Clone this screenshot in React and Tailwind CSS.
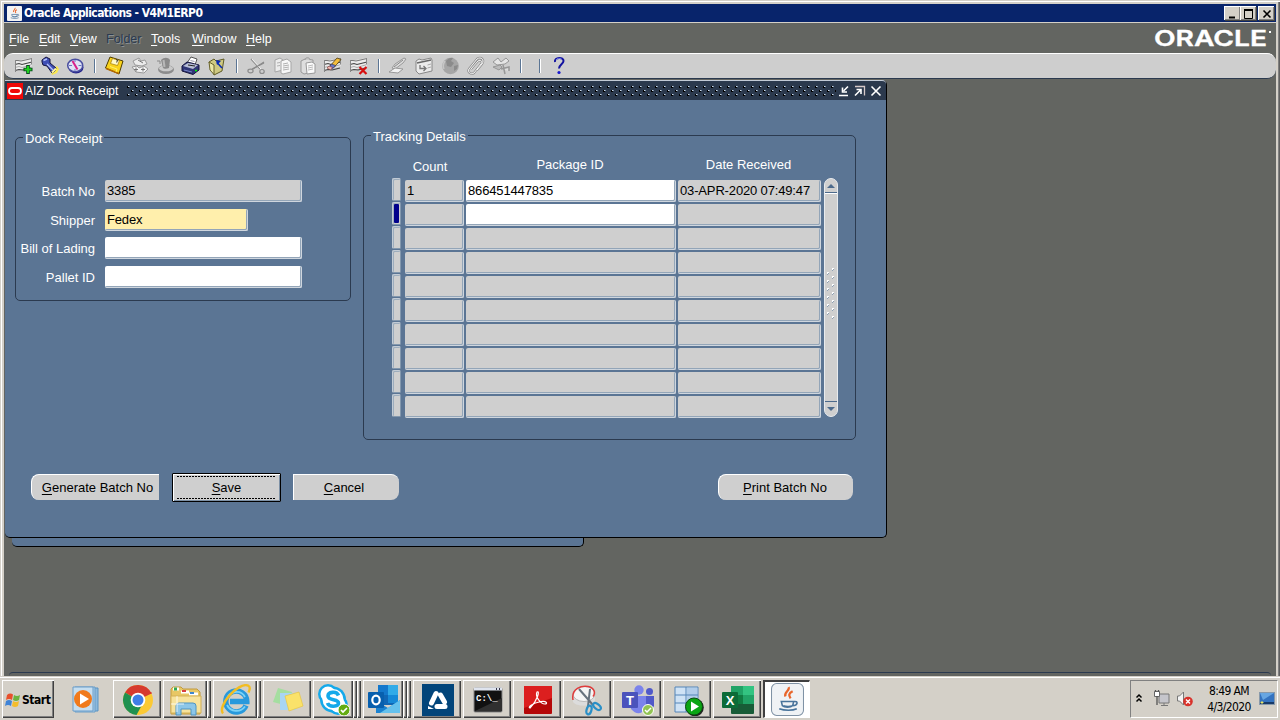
import React from "react";

const CELL =
  "h-[22px] shrink-0 rounded-[2px] border-r border-b border-[#cfd6de] shadow-[inset_-1px_-1px_0_#93a5b8] pl-[2px] text-[13px] leading-[21px] tracking-[-0.15px] text-black whitespace-nowrap overflow-hidden";

function Svg({ children, className, w = 20, h = 20, box }) {
  return (
    <svg className={className} width={w} height={h} viewBox={box || `0 0 ${w} ${h}`} fill="none">
      {children}
    </svg>
  );
}

/* ---------- toolbar drawings ---------- */

function Rows() {
  return (
    <g>
      <path d="M1 5 18 2v8L1 15z" fill="#ececec" />
      <path d="M1 4.500h3l3 .5 11-2.500" stroke="#777" />
      <path d="M1 8.500l4-1 3 1 10-2.500" stroke="#444" strokeWidth="1.200" />
      <path d="M1 11.500l4-1 3 1 10-3" stroke="#aaa" />
      <path d="M1 14.500l4-1 4 .5 8-2" stroke="#444" strokeWidth="1.200" />
      <path d="M1.500 4v12M17.500 2v6" stroke="#888" />
    </g>
  );
}

const icons = {
  newRow: (
    <g>
      <Rows />
      <path d="M14 9v9M9.500 13.500h9" stroke="#064d1c" strokeWidth="3.600" />
      <path d="M14 10v7M10.500 13.500h7" stroke="#1fd01f" strokeWidth="2" />
    </g>
  ),
  find: (
    <g>
      <path d="M12 13l5-3 2 3-2 4-5 2-1-3z" fill="#fbe94e" />
      <path d="M2 4l4-3 4 2v4l6 5-1 3-3 2-5-7-4-1-1-3z" fill="#3f4eb5" stroke="#15153f" />
      <path d="M3.500 4.500L7 3M7 8l6 6" stroke="#b5c2fa" strokeWidth="1.400" />
      <path d="M12 16.500l4-4" stroke="#fff6a0" strokeWidth="2" />
    </g>
  ),
  compass: (
    <g>
      <ellipse cx="11" cy="11.500" rx="7.500" ry="6" fill="#24248a" />
      <ellipse cx="10.200" cy="9.500" rx="7.500" ry="6.200" fill="#dfe3f5" stroke="#4a4fa0" strokeWidth="1.500" />
      <path d="M4 9.500h3M13.500 9.500h3M10 4v2M10 13v2" stroke="#6a74c0" />
      <path d="M7.500 5l5 8.500" stroke="#d8208a" strokeWidth="2" />
    </g>
  ),
  save: (
    <g>
      <path d="M6 1l13 4-4 13L1.500 12z" fill="#f9d21b" stroke="#4c3c00" />
      <path d="M2 12.500l13 5" stroke="#b66b00" strokeWidth="1.600" />
      <path d="M8.500 2.500l7 2-2 5-7-2z" fill="#fff9c7" stroke="#a27900" strokeWidth=".7" />
      <path d="M12 3.500l1.500.5-.8 2.500" stroke="#333" />
      <path d="M6 10.500l7 2.500-1 3" stroke="#fff06b" />
    </g>
  ),
  next: (
    <g stroke="#9a9a9a">
      <path d="M3 5l6-3 2 3 4-1 2 4-5 2-7-1z" fill="#ececec" />
      <path d="M2 11l5-1 2 2 5-2 4 3-4 4-8-1z" fill="#f2f2f2" />
      <path d="M4 13.500h4m3 0h4M6 11.500v4m7-4v4" stroke="#777" />
      <path d="M8 4l5 3" stroke="#777" />
    </g>
  ),
  hat: (
    <g>
      <ellipse cx="11" cy="13.500" rx="8" ry="4.500" fill="#8c8c8c" />
      <ellipse cx="11" cy="12.300" rx="7" ry="3" fill="#c9c9c9" />
      <path d="M6 4c3-3 7-3 9 0l-1 8c-2 1-5 1-6 0z" fill="#8a8a8a" />
      <path d="M8.500 4l1 7" stroke="#b8b8b8" strokeWidth="2" />
      <path d="M2 5h3v3" stroke="#888" />
    </g>
  ),
  print: (
    <g>
      <path d="M6 7l4-6 6 2-2 6z" fill="#fff" stroke="#555" />
      <path d="M9.500 4.500l4 1M8.500 6.500l4 1" stroke="#99a" />
      <path d="M1 10l5-4 12 3v5l-6 4.500L1 15z" fill="#2f3575" stroke="#15153c" />
      <path d="M2 10l5-3 10 2-5 4z" fill="#b9bfd5" />
      <path d="M7 9l7 1" stroke="#222" />
      <path d="M3 14l8 2" stroke="#7684c8" />
      <path d="M14 14.500h2" stroke="#0f0" strokeWidth="1.500" />
    </g>
  ),
  folderArrow: (
    <g>
      <path d="M2 6l5-3 2 2 8-2-2 12-8 4z" fill="#cfc981" stroke="#5e5a25" />
      <path d="M2 6l5 3v9.500L3 14z" fill="#ece8a6" stroke="#68632b" />
      <path d="M15 12L10 6.500" stroke="#0b2bb2" strokeWidth="1.600" />
      <path d="M9 4l5 1-4 4z" fill="#0b2bb2" />
    </g>
  ),
  cut: (
    <g stroke="#8c8c8c" strokeWidth="1.200">
      <path d="M4 3l9 10M17 7L5 13" />
      <path d="M5 3l9 10" stroke="#fff" strokeWidth=".8" />
      <ellipse cx="3.500" cy="15" rx="2.600" ry="1.800" />
      <ellipse cx="15" cy="15.500" rx="2.200" ry="2" />
      <path d="M6 13L17 6" stroke="#888" />
    </g>
  ),
  copy: (
    <g stroke="#a5a5a5">
      <path d="M2 4l5-2 3 2v10l-8 2z" fill="#ececec" />
      <path d="M8 5l6-2 4 3v10l-8 2-2-1z" fill="#f7f7f7" />
      <path d="M10 8l5-1m-5 3l6-1m-6 3l6-1m-6 3l6-1M4 7l3-.500M4 10l3-.500" stroke="#b0b0b0" />
    </g>
  ),
  paste: (
    <g stroke="#999">
      <path d="M3 5l4-2 8 1v12l-9 2-3-2z" fill="#dedede" />
      <path d="M7 4c0-3 5-3 5 0" fill="#ccc" />
      <path d="M8 7l6-1 3 2v9l-8 1z" fill="#fafafa" />
      <path d="M10 10l5-1m-5 3l5-1m-5 3l5-1" stroke="#bbb" />
    </g>
  ),
  clear: (
    <g>
      <Rows />
      <path d="M7 10l7-8 4 1.500-7 8z" fill="#f4bd3c" stroke="#4d3b12" strokeWidth=".8" />
      <path d="M6 11l2.500-3 4 1.500-2.500 3z" fill="#6a78c8" stroke="#222a5a" strokeWidth=".6" />
      <path d="M4 12l2-2 3.500 1.500-2 2.500z" fill="#f2b9b0" stroke="#733" strokeWidth=".6" />
    </g>
  ),
  remove: (
    <g>
      <Rows />
      <path d="M10.500 11l7 7M17.500 11l-7 7" stroke="#d80f0f" strokeWidth="2.200" />
    </g>
  ),
  pen: (
    <g stroke="#999">
      <path d="M5 12l3-4 9-6 2 1-3 4-8 6z" fill="#ddd" />
      <path d="M2 16l6-4 8 1-5 4z" fill="#f2f2f2" />
      <path d="M7 11l9-7" stroke="#888" />
    </g>
  ),
  folderTools: (
    <g stroke="#888">
      <path d="M2 5l3-2 3 1 9-2 1 2v11l-13 3-3-3z" fill="#ebebeb" />
      <path d="M3 7l14-3" stroke="#666" strokeWidth="1.400" />
      <path d="M6 9v3.500h6m-2.500-2.500l2.500 2.500-2.500 2.500" stroke="#777" strokeWidth="1.300" />
      <path d="M13.500 9l3.500-1m-3.500 4l3.500-1" stroke="#aaa" />
    </g>
  ),
  globe: (
    <g>
      <circle cx="10.500" cy="10" r="8.300" fill="#a6a6a6" />
      <path d="M6 5c2-3 6-4 7-3l-2 3 3 2-3 4-4-1zM14 10l4-1-1 4-3 2z" fill="#8b8b8b" />
      <path d="M5 5c-2 3-2 6-1 8" stroke="#c6c6c6" strokeWidth="1.500" />
    </g>
  ),
  clip: (
    <g>
      <path d="M6 13l7-8c3-2 5 1 3 3l-7 9c-3 2-7-1-5-4L12 3c4-3 8 1 5 5l-5 6" stroke="#8d8d8d" strokeWidth="2.200" />
      <path d="M6 13l7-8c3-2 5 1 3 3l-7 9c-3 2-7-1-5-4L12 3c4-3 8 1 5 5l-5 6" stroke="#f5f5f5" strokeWidth="1" />
    </g>
  ),
  propeller: (
    <g stroke="#979797">
      <path d="M2 6l5-4 3 4 5-4 3 3-4 3-8 1z" fill="#e5e5e5" />
      <path d="M2 11l7-2 2 2-3 3z" fill="#bbb" />
      <path d="M12 9l2 9M10 13l8-2v4" fill="#ddd" strokeWidth="1.500" />
    </g>
  ),
  help: (
    <g>
      <path d="M6 6c-1-5 9-5.500 8.500-1 0 3-4 3-4.500 7.500" stroke="#1212a0" strokeWidth="2" />
      <path d="M7 4c1-2 4-2 5.500-1" stroke="#8c95f5" strokeWidth=".8" />
      <circle cx="10" cy="16.500" r="1.600" fill="#1818d0" />
    </g>
  ),
};

const toolbar = [
  ["newRow", ""], ["find", "ml-[6px]"], ["compass", "ml-[5px]"], ["sep", "ml-[9px]"],
  ["save", "ml-[8px]"], ["next", "ml-[6px]"], ["hat", "ml-[5px]"], ["print", "ml-[6px]"],
  ["folderArrow", "ml-[6px]"], ["sep", "ml-[9px]"], ["cut", "ml-[9px]"], ["copy", "ml-[6px]"],
  ["paste", "ml-[5px]"], ["clear", "ml-[5px]"], ["remove", "ml-[6px]"], ["sep", "ml-[9px]"],
  ["pen", "ml-[7px]"], ["folderTools", "ml-[7px]"], ["globe", "ml-[6px]"], ["clip", "ml-[5px]"],
  ["propeller", "ml-[6px]"], ["sep", "ml-[9px]"], ["sep", "ml-[17px]"], ["help", "ml-[8px]"],
];

function JavaCup() {
  return (
    <g>
      <path d="M17 4c2 3-5 5-3 9M21 8c-4 2-4 4-2 7" stroke="#e8662c" strokeWidth="2.200" />
      <path d="M10 18h12l-1 4c-2 2-8 2-10 0zM22 18c5-1 4 4-1 4M8 25c5 2 13 2 17 0M12 22c3 1 6 1 9 0" stroke="#48739b" strokeWidth="1.500" />
    </g>
  );
}

/* ---------- application window ---------- */

function TitleBar() {
  const btn =
    "flex h-[14px] w-[16px] items-center justify-center border-t border-l border-white bg-[#d4d0c8] shadow-[inset_-1px_-1px_0_#808080,1px_1px_0_#404040]";
  return (
    <div className="flex h-[18px] items-center bg-[#08246b] pl-[3px] pr-[2px]">
      <Svg w={15} h={15} box="0 0 32 32" className="shrink-0">
        <rect width="32" height="32" rx="2" fill="#f3f3f3" />
        <JavaCup />
      </Svg>
      <span className="ml-[2px] flex-1 whitespace-nowrap font-['DejaVu_Sans_Condensed','DejaVu_Sans',sans-serif] text-[12px] leading-[16px] font-bold tracking-[-0.57px] text-white">
        Oracle Applications - V4M1ERP0
      </span>
      <div className="flex">
        <div className={btn}>
          <Svg w={14} h={12}><path d="M3 9.500h6" stroke="#000" strokeWidth="2" /></Svg>
        </div>
        <div className={btn}>
          <Svg w={14} h={12}><path d="M2.500 2v8.500h8V2" stroke="#000" /><path d="M2 2h9" stroke="#000" strokeWidth="2" /></Svg>
        </div>
        <div className={`${btn} ml-[2px]`}>
          <Svg w={14} h={12}><path d="M3.500 2.500l7 7M10.500 2.500l-7 7" stroke="#000" strokeWidth="1.600" /></Svg>
        </div>
      </div>
    </div>
  );
}

const menus = [
  ["", "F", "ile", "w-[30px]"],
  ["", "E", "dit", "w-[31px]"],
  ["", "V", "iew", "w-[36px]"],
  ["Fo", "l", "der", "w-[45px]"],
  ["", "T", "ools", "w-[41px]"],
  ["", "W", "indow", "w-[54px]"],
  ["", "H", "elp", "w-[40px]"],
];

function MenuBar() {
  return (
    <div className="flex h-[30px] items-center pt-[2px] pl-[5px] pr-[3px] text-[12.500px] text-white">
      {menus.map(([a, u, b, w]) => (
        <div
          key={u}
          className={`${w} whitespace-nowrap leading-[16px] ${a ? "text-[#2b3a4f] [text-shadow:1px_1px_0_#8a8f92]" : ""}`}
        >
          {a}
          <span className="underline underline-offset-2">{u}</span>
          {b}
        </div>
      ))}
      <svg className="-mt-[2px] ml-auto" width="120" height="22" viewBox="0 0 120 22">
        <text x="1" y="18.500" fill="#fff" stroke="#fff" strokeWidth=".35" fontFamily="Inter, Liberation Sans, sans-serif" fontWeight="600" fontSize="21" textLength="113" lengthAdjust="spacingAndGlyphs">
          ORACLE
        </text>
        <rect x="116" y="4" width="2" height="2" fill="#fff" />
      </svg>
    </div>
  );
}

function ToolBar() {
  return (
    <div className="flex h-[26px] items-center rounded-[9px] border-t border-b border-t-white border-b-[#2b3a4f] bg-[#cecece] pl-[10px]">
      {toolbar.map(([name, gap], i) =>
        name === "sep" ? (
          <div key={i} className={`${gap} h-[14px] w-[2px] border-l border-[#5b7594] bg-white`} />
        ) : (
          <Svg key={i} className={`${gap} shrink-0`}>{icons[name]}</Svg>
        )
      )}
    </div>
  );
}

function FormTitle() {
  return (
    <div className="flex h-[20px] items-center rounded-tr-[4px] border-t border-[#c3cbd6] bg-[#2b394d]">
      <Svg w={18} h={16} className="shrink-0">
        <rect x="2" width="16" height="16" fill="#f00808" />
        <rect x="4" y="5" width="12" height="6" rx="3" stroke="#fff" strokeWidth="1.800" />
      </Svg>
      <span className="ml-[2px] w-[101px] shrink-0 whitespace-nowrap text-[12px] leading-[16px] text-white">AIZ Dock Receipt</span>
      <svg width="710" height="12" shapeRendering="crispEdges">
        <defs>
          <pattern id="grip" width="8" height="8" patternUnits="userSpaceOnUse">
            <path d="M2 1h1v1h-1zM6 5h1v1h-1z" fill="#c9d8e8" />
            <path d="M3 1h1v1h-1zM7 5h1v1h-1z" fill="#7f93a9" />
            <path d="M1 1h1v2h-1zM2 2h1v1h-1zM5 5h1v2h-1zM6 6h1v1h-1z" fill="#000" />
          </pattern>
        </defs>
        <rect width="710" height="12" fill="url(#grip)" />
      </svg>
      <Svg w={14} h={14} className="ml-[1px]">
        <path d="M2 11.500h9M11 2.500L6.500 7" stroke="#fff" strokeWidth="1.600" />
        <path d="M5.500 3.500v4.500H10" stroke="#fff" strokeWidth="1.600" />
      </Svg>
      <Svg w={14} h={14} className="ml-[2px]">
        <path d="M2 2.500h9.500v9" stroke="#d6c9c9" strokeWidth="1.300" />
        <path d="M2 11.500l5.500-5.500M3.500 5.500H8v4.500" stroke="#fff" strokeWidth="1.600" />
      </Svg>
      <Svg w={14} h={14} className="ml-[2px]">
        <path d="M2.500 2.500l9 9M11.500 2.500l-9 9" stroke="#fff" strokeWidth="1.600" />
      </Svg>
    </div>
  );
}

const fields = [
  ["Batch No", "3385", "w-[197px] bg-[#cfcfcf]", ""],
  ["Shipper", "Fedex", "w-[143px] bg-[#ffefac]", "mt-[7px]"],
  ["Bill of Lading", "", "w-[197px] bg-white", "mt-[6px]"],
  ["Pallet ID", "", "w-[197px] bg-white", "mt-[7px]"],
];

function Legend({ children }) {
  return (
    <div className="ml-[7px] -mt-[8px] h-[16px] w-fit bg-[#5b7594] px-[2px] text-[13px] leading-[17px] whitespace-nowrap text-white">
      {children}
    </div>
  );
}

function DockReceipt() {
  return (
    <section className="mt-[37px] h-[164px] w-[336px] rounded-[5px] border border-[#2b3a4f]">
      <Legend>Dock Receipt</Legend>
      <div className="mt-[34px]">
        {fields.map(([label, value, box, gap]) => (
          <div key={label} className={`flex h-[22px] ${gap}`}>
            <label className="w-[79px] shrink-0 text-right text-[13px] leading-[23px] whitespace-nowrap text-white">{label}</label>
            <div className={`ml-[10px] ${CELL} ${box}`}>{value}</div>
          </div>
        ))}
      </div>
    </section>
  );
}

const records = [
  ["1", "866451447835", "03-APR-2020 07:49:47"],
  ["", "", ""], ["", "", ""], ["", "", ""], ["", "", ""],
  ["", "", ""], ["", "", ""], ["", "", ""], ["", "", ""], ["", "", ""],
];

function ScrollBar() {
  return (
    <div className="-mt-[2px] ml-[3px] flex h-[239px] w-[14px] flex-col items-center rounded-[7px] border border-[#e8ebee] bg-[#cfcfcf]">
      <div className="flex h-[14px] w-full items-center justify-center border-b border-[#4c6a8c]">
        <Svg w={8} h={5}><path d="M0 5l4-4 4 4z" fill="#4c6a8c" /></Svg>
      </div>
      <div className="flex w-full flex-1 items-center justify-center border-t border-white pb-[8px]">
        <svg width="10" height="54" shapeRendering="crispEdges">
          {[0, 1, 2, 3, 4, 5, 6].map((i) => (
            <g key={i}>
              <path d={`M6 ${1 + i * 8}h2v1h-1v1h-1z`} fill="#fff" />
              <path d={`M8 ${2 + i * 8}v1h-1v1h-1v-1h1v-1z`} fill="#8ea0b3" />
              {i < 6 && <path d={`M1 ${5 + i * 8}h2v1h-1v1h-1z`} fill="#fff" />}
              {i < 6 && <path d={`M3 ${6 + i * 8}v1h-1v1h-1v-1h1v-1z`} fill="#8ea0b3" />}
            </g>
          ))}
        </svg>
      </div>
      <div className="flex h-[15px] w-full items-center justify-center border-t border-[#4c6a8c]">
        <Svg w={8} h={5}><path d="M0 0l4 4 4-4z" fill="#4c6a8c" /></Svg>
      </div>
    </div>
  );
}

function TrackingDetails() {
  return (
    <section className="mt-[35px] ml-[12px] h-[305px] w-[493px] rounded-[5px] border border-[#2b3a4f]">
      <Legend>Tracking Details</Legend>
      <div className="mt-[12px] flex h-[24px] pl-[41px] text-center text-[13px] leading-[17px] text-white">
        <div className="w-[50px] pt-[2px]">Count</div>
        <div className="ml-[8px] w-[214px]">Package ID</div>
        <div className="w-[143px]">Date Received</div>
      </div>
      <div className="flex pl-[28px]">
        <div className="-mt-[2px] flex flex-col gap-[1px]">
          {records.map((_, i) => (
            <div
              key={i}
              className="h-[23px] w-[9px] rounded-[2px] border border-[#c3ccd6] border-r-[#8398ae] border-b-[#8398ae] bg-[#cfcfcf] p-[1px] shadow-[inset_1px_1px_0_#9dadbd]"
            >
              {i === 1 && <div className="h-full w-full rounded-[1px] bg-[#00008b]" />}
            </div>
          ))}
        </div>
        <div className="ml-[4px] flex flex-col gap-[2px]">
          {records.map(([count, pkg, date], i) => (
            <div key={i} className="flex gap-[2px]">
              <div className={`${CELL} w-[59px] bg-[#cfcfcf]`}>{count}</div>
              <div className={`${CELL} w-[210px] ${i < 2 ? "bg-white" : "bg-[#cfcfcf]"}`}>{pkg}</div>
              <div className={`${CELL} w-[143px] bg-[#cfcfcf]`}>{date}</div>
            </div>
          ))}
        </div>
        <ScrollBar />
      </div>
    </section>
  );
}

function Button({ mnemonic, rest, className }) {
  return (
    <button
      className={`mt-[1px] flex h-[26px] shrink-0 items-center justify-center border-t border-l border-white bg-[#cfcfcf] pt-[1px] text-[13px] leading-[16px] whitespace-nowrap text-black ${className}`}
    >
      <span><span className="underline underline-offset-2">{mnemonic}</span>{rest}</span>
    </button>
  );
}

function DockForm() {
  return (
    <div className="absolute top-[80px] left-[5px] h-[458px] w-[882px] rounded-[5px] border-r border-b border-black bg-[#5b7594]">
      <FormTitle />
      <div className="flex pl-[10px]">
        <DockReceipt />
        <TrackingDetails />
      </div>
      <div className="mt-[33px] flex items-start pl-[26px]">
        <Button mnemonic="G" rest="enerate Batch No" className="w-[128px] rounded-l-[8px] pl-[4px]" />
        <div className="ml-[13px] flex h-[29px] w-[109px] flex-col items-center justify-between rounded-[1px] border border-black bg-[#cfcfcf] p-[2px] shadow-[inset_1px_1px_0_#fff,inset_-1px_-1px_0_#7d90a5]">
          <div className="h-px w-[99px] bg-[repeating-linear-gradient(90deg,#000_0_2px,transparent_2px_3px)]" />
          <button className="text-[13px] leading-[16px] text-black"><span className="underline underline-offset-2">S</span>ave</button>
          <div className="h-px w-[99px] bg-[repeating-linear-gradient(90deg,#000_0_2px,transparent_2px_3px)]" />
        </div>
        <Button mnemonic="C" rest="ancel" className="ml-[12px] w-[106px] rounded-r-[8px] pr-[5px]" />
        <Button mnemonic="P" rest="rint Batch No" className="ml-[319px] w-[135px] rounded-[8px] pr-[2px]" />
      </div>
    </div>
  );
}

/* ---------- taskbar drawings, 32 x 32 ---------- */

const apps = [
  ["chrome", 1, (
    <g>
      <circle cx="16" cy="16" r="15" fill="#fbc934" />
      <path d="M16 16L3 8.500A15 15 0 0 1 29.500 9.500z" fill="#d63a2f" />
      <path d="M3 8.500A15 15 0 0 0 14.500 31l6-11L16 16z" fill="#1f9150" />
      <path d="M16 9h13.500" stroke="#d63a2f" strokeWidth="2" />
      <circle cx="16" cy="16" r="7.300" fill="#fff" />
      <circle cx="16" cy="16" r="5.500" fill="#3f7ee8" />
    </g>
  )],
  ["explorer", 2, (
    <g>
      <path d="M1 5l2-2h8l2 2h14l3 3v22H1z" fill="#e8c765" stroke="#c29a3e" />
      <path d="M3 5h6M11 8h8M19 10h9" stroke="#fff" strokeWidth="3" />
      <path d="M4 5h3" stroke="#2fa84f" strokeWidth="3" />
      <path d="M12 7h4" stroke="#d94040" strokeWidth="2" />
      <path d="M20 9h4" stroke="#3f87cf" strokeWidth="2" />
      <path d="M1 12h30v17H1z" fill="#f8e39c" stroke="#d3b057" />
      <path d="M6 31v-9q0-3 3-3h14q3 0 3 3v9h-5v-6H11v6z" fill="#8cc6e8" stroke="#4f94c2" />
      <path d="M7 12v16M1 20h13" stroke="#fff" opacity=".8" />
    </g>
  )],
  ["ie", 2, (
    <g>
      <path d="M26 21.500A10.500 10.500 0 1 1 26.800 17.500H10" stroke="#2899dc" strokeWidth="5.500" />
      <path d="M25 22.500A10.500 10.500 0 0 1 7 21M7 15c2-8 14-10 18-2" stroke="#7bd2f7" strokeWidth="1.800" />
      <path d="M3 29.500C-3 22 18-2 28 1.500c2.500 1 2 4 .5 7" stroke="#f3bd22" strokeWidth="2.400" />
    </g>
  )],
  ["notes", 1, (
    <g>
      <path d="M6 4l14 4-4 14-15-4z" fill="#a5dea0" />
      <path d="M8 9h16v17H8z" fill="#a8d5f4" />
      <path d="M13 12l14-4 4 14-14 5z" fill="#fae26a" stroke="#e6c544" strokeWidth=".7" />
    </g>
  )],
  ["skype", 3, (
    <g>
      <circle cx="10" cy="10" r="10" fill="#14a9ea" />
      <circle cx="20" cy="21" r="10" fill="#14a9ea" />
      <circle cx="15" cy="15.500" r="13" fill="#14a9ea" />
      <circle cx="10" cy="10" r="7.500" fill="#fff" />
      <circle cx="20" cy="21" r="7.500" fill="#fff" />
      <circle cx="15" cy="15.500" r="10.500" fill="#fff" />
      <path d="M20.500 11.500c-2-5-10.500-3.500-10.500.5 0 5 10.500 2.500 10.500 7 0 4-9.500 4.500-11 0" stroke="#14a9ea" strokeWidth="3.600" />
      <circle cx="26" cy="26" r="6" fill="#64ac12" stroke="#fff" />
      <path d="M23 26l2 2 4-4" stroke="#fff" strokeWidth="1.700" />
    </g>
  )],
  ["outlook", 3, (
    <g>
      <path d="M10 1h20v20H10z" fill="#1066b5" />
      <path d="M10 1h10v10H10z" fill="#1378cc" />
      <path d="M20 1h10v10H20z" fill="#32abe8" />
      <path d="M20 11h10v8H20z" fill="#1689d8" />
      <path d="M8 17l12 7 12-8v13H8z" fill="#1a82d0" />
      <path d="M12 29l20-13v13z" fill="#65c1ed" />
      <rect x="0" y="8" width="16" height="16" rx="1" fill="#075fae" />
      <ellipse cx="8" cy="16" rx="3.700" ry="4.300" stroke="#fff" strokeWidth="2.200" />
    </g>
  )],
  ["drive", 1, (
    <g>
      <rect width="32" height="32" fill="#02457a" />
      <g stroke="#fff" strokeWidth="5" strokeLinecap="round">
        <path d="M14 9.500l-4.500 9.500M18.500 11l4 7M15 22.500h8" />
      </g>
      <path d="M6 22l6 3-6 0z" fill="#fff" />
    </g>
  )],
  ["cmd", 1, (
    <g>
      <rect x="2" y="4" width="28" height="24" rx="1" fill="#111" stroke="#888" />
      <path d="M2 5h28" stroke="#dfe4ee" strokeWidth="3" />
      <path d="M24 5h1m2 0h1" stroke="#334" strokeWidth="2" />
      <path d="M3 27l27-13v13z" fill="#303030" />
      <text x="4" y="17" fill="#fff" fontFamily="Liberation Mono, monospace" fontSize="9" fontWeight="700">C:\_</text>
    </g>
  )],
  ["adobe", 1, (
    <g>
      <rect x="2" y="2" width="28" height="28" rx="1" fill="#b50808" />
      <path d="M2 2h28v12L2 24z" fill="#dc1f1f" />
      <path d="M15 8c3-2 1 8-7 16-3-1 4-5 9-6 8-2 9 2 6 2-5 0-10-8-8-12z" stroke="#fff" strokeWidth="1.200" />
    </g>
  )],
  ["snip", 1, (
    <g>
      <path d="M1 10v8c3 5 20 5 22-1v-7z" fill="#dcdcdc" />
      <ellipse cx="12" cy="10" rx="11" ry="7.500" fill="#f5f5f5" stroke="#b9b9b9" />
      <path d="M1 16C-1 4 10 1.500 16 2.500s8 6 5 10" stroke="#e03c3c" strokeWidth="1.500" />
      <path d="M7 5l14 16M18 5l-2 17" stroke="#67727d" strokeWidth="2" />
      <ellipse cx="17" cy="26" rx="2.400" ry="4.500" stroke="#2a8fc7" strokeWidth="2.200" transform="rotate(15 17 26)" />
      <ellipse cx="25" cy="22.500" rx="2.400" ry="4.500" stroke="#2a8fc7" strokeWidth="2.200" transform="rotate(-50 25 22.500)" />
    </g>
  )],
  ["teams", 1, (
    <g>
      <circle cx="17" cy="6" r="4.700" fill="#7b83eb" />
      <circle cx="27.500" cy="7.500" r="3.500" fill="#5059c9" />
      <path d="M22 12h10v10q-3 6-10 3z" fill="#5059c9" />
      <path d="M9 12h15v12q-7 10-15 1z" fill="#7b83eb" />
      <rect y="8" width="16" height="16" rx="1" fill="#4b53bc" />
      <text x="8" y="20.500" fill="#fff" fontFamily="Liberation Sans, sans-serif" fontSize="13" fontWeight="700" textAnchor="middle">T</text>
      <circle cx="26" cy="26" r="5.500" fill="#92c353" stroke="#fff" />
      <path d="M23 26l2 2 4-4" stroke="#fff" strokeWidth="1.500" />
    </g>
  )],
  ["sql", 1, (
    <g>
      <path d="M3 3h23v25H3z" fill="#cfe2f5" stroke="#5585b8" />
      <path d="M15 4h10v23H15z" fill="#b2cdea" />
      <path d="M3 11h23M3 19h23M14 3v25" stroke="#5585b8" />
      <circle cx="23" cy="23.500" r="8.800" fill="#222" />
      <circle cx="22" cy="22.500" r="8.500" fill="#0aa514" stroke="#0c4c10" />
      <path d="M19 17.500l8 5-8 5z" fill="#fff" />
    </g>
  )],
  ["excel", 1, (
    <g>
      <rect x="9" y="2" width="23" height="28" rx="1" fill="#185c37" />
      <path d="M9 2h12v9H9z" fill="#21a366" />
      <path d="M21 2h11v9H21z" fill="#33c481" />
      <path d="M9 11h12v9H9z" fill="#107c41" />
      <path d="M21 11h11v9H21z" fill="#21a366" />
      <rect y="8" width="16" height="16" rx="1" fill="#0c6b38" />
      <text x="8" y="20.500" fill="#fff" fontFamily="Liberation Sans, sans-serif" fontSize="13" fontWeight="700" textAnchor="middle">X</text>
    </g>
  )],
];

const RAISED = "border-t border-l border-white bg-[#d4d0c8] shadow-[inset_-1px_-1px_0_#404040,inset_-2px_-2px_0_#808080]";

function TaskButton({ stack, children }) {
  const icon = <Svg w={32} h={32} className="shrink-0">{children}</Svg>;
  return (
    <div className={`flex h-[38px] w-[48px] shrink-0 ${stack === 1 ? `items-center justify-center ${RAISED}` : ""}`}>
      {stack === 1 ? icon : (
        <>
          <div className={`flex flex-1 items-center justify-center ${RAISED}`}>{icon}</div>
          {stack === 3 && <div className={`w-[4px] ${RAISED}`} />}
          <div className={`w-[4px] ${RAISED}`} />
        </>
      )}
    </div>
  );
}

function TaskBar() {
  return (
    <div className="flex h-[44px] items-start border-t border-[#d4d0c8] bg-[#d4d0c8] pt-[3px] pl-[2px] shadow-[inset_0_1px_0_#fff]">
      <div className={`flex h-[38px] w-[52px] shrink-0 items-center pl-[1px] ${RAISED}`}>
        <Svg w={17} h={16} className="shrink-0">
          <path d="M3 3q3-2.500 6-.5L8 8Q5 6 2 8z" fill="#e8502c" />
          <path d="M10 3q3 2 6 0l-1 5q-3 2-6 0z" fill="#6cb33f" />
          <path d="M2 9q3-2 6 0l-1 5q-3-2-6 0z" fill="#3f83d6" />
          <path d="M9 9q3 2 6 0l-1 5q-3 2-6 0z" fill="#f5bd2c" />
        </Svg>
        <span className="ml-[1px] font-['DejaVu_Sans_Condensed','DejaVu_Sans',sans-serif] text-[12px] font-bold tracking-[-0.45px] text-black">Start</span>
      </div>
      <div className="flex h-[38px] w-[59px] shrink-0 items-center justify-center pl-[5px]">
        <Svg w={32} h={32}>
          <path d="M8 5h20v23H8z" fill="#8cb9dc" stroke="#5b93c2" />
          <path d="M5 4h20v25H5z" fill="#a9cde8" stroke="#6b9dc8" />
          <path d="M3 4h20v24H3z" fill="#c6def0" stroke="#6b9dc8" />
          <circle cx="13" cy="16" r="9" fill="#f07a1c" />
          <path d="M10 10.500l9 5.500-9 5.500z" fill="#fff" />
        </Svg>
      </div>
      <div className="flex gap-[2px]">
        {apps.map(([name, stack, art]) => (
          <TaskButton key={name} stack={stack}>{art}</TaskButton>
        ))}
        <div className="flex h-[38px] w-[47px] items-center justify-center border-t-2 border-l-2 border-r border-b border-t-[#404040] border-l-[#404040] border-r-white border-b-white bg-white pl-[1px]">
          <Svg w={33} h={33} box="0 0 32 32">
            <rect x=".5" y=".5" width="31" height="31" rx="5" fill="#eff2f5" stroke="#7f92a5" />
            <JavaCup />
          </Svg>
        </div>
      </div>
      <div className="mr-[2px] ml-auto flex h-[38px] w-[148px] items-center border border-t-[#808080] border-l-[#808080] border-r-white border-b-white">
        <Svg w={8} h={14} className="ml-[4px]">
          <path d="M1.500 5.500L4 3l2.500 2.500M1.500 9.500L4 7l2.500 2.500" stroke="#000" strokeWidth="1.500" />
        </Svg>
        <Svg w={18} h={18} className="ml-[10px]">
          <path d="M6 4h10v9H6z" fill="#c5c5cb" stroke="#777" />
          <path d="M8 15.500h7M11 13v2" stroke="#777" />
          <path d="M1.500 1.500h5v5h-5z" fill="#fff" stroke="#666" />
          <path d="M4 6v9M2.500 0v2m3-2v2" stroke="#555" strokeWidth="1.300" />
        </Svg>
        <Svg w={18} h={18} className="ml-[5px]">
          <path d="M1.500 6h2l4-4v13l-4-4h-2z" fill="#f4f4f4" stroke="#777" />
          <circle cx="12" cy="11.500" r="4.800" fill="#d8322b" />
          <path d="M10 9.500l4 4m0-4l-4 4" stroke="#fff" strokeWidth="1.400" />
        </Svg>
        <div className="ml-[11px] w-[48px] text-center font-['DejaVu_Sans_Condensed','DejaVu_Sans',sans-serif] text-[12px] leading-[16px] tracking-[-0.6px] whitespace-nowrap text-black">
          8:49 AM
          <br />
          4/3/2020
        </div>
        <Svg w={16} h={14} className="ml-[6px]">
          <rect x=".5" y=".5" width="15" height="12" fill="#3473c0" stroke="#89a" />
          <path d="M1 1h14L4 8z" fill="#67a6e2" />
          <path d="M1 11h14" stroke="#173a69" strokeWidth="2" />
          <path d="M3 9v3M1.500 10.500h3" stroke="#e7e36a" />
        </Svg>
      </div>
    </div>
  );
}

export default function App() {
  return (
    <div className="relative flex h-[720px] w-[1280px] flex-col overflow-hidden bg-[#d4d0c8] font-['Liberation_Sans',Arial,sans-serif]">
      <div className="flex h-[676px] flex-col border-t border-l border-[#d4d0c8] pt-[3px] pr-[4px] pl-[3px] shadow-[inset_1px_1px_0_#fff,inset_-1px_0_0_#606060,inset_-2px_0_0_#808080]">
        <TitleBar />
        <div className="flex flex-1 flex-col border-t border-[#d4d0c8] bg-[#636561]">
          <MenuBar />
          <ToolBar />
          <div className="mx-[5px] mt-auto h-[4px] rounded-t-[6px] border-t border-[#2b3a4f]" />
        </div>
      </div>
      <div className="absolute top-[530px] left-[12px] h-[17px] w-[572px] rounded-b-[5px] border-r border-b border-black bg-[#5b7594]" />
      <DockForm />
      <TaskBar />
    </div>
  );
}
